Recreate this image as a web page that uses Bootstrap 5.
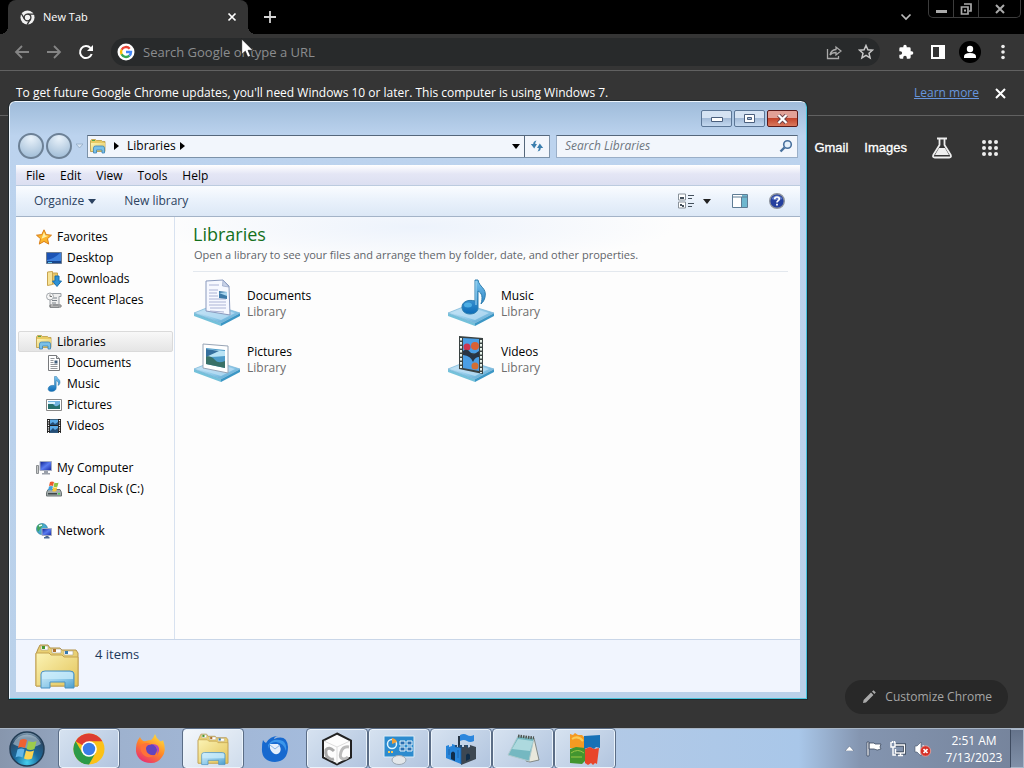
<!DOCTYPE html>
<html lang="en">
<head>
<meta charset="utf-8">
<meta name="viewport" content="width=device-width, initial-scale=1">
<title>New Tab</title>
<link href="https://cdn.jsdelivr.net/npm/bootstrap@5.3.0/dist/css/bootstrap.min.css" rel="stylesheet">
<style>
:root{--ui:"Open Sans","Noto Sans",sans-serif}
html,body{height:100%}
body{font-family:var(--ui);font-size:12px;line-height:16px;background:#353535;color:#000;overflow:hidden}
button,input{font:inherit;color:inherit}
svg{display:block;flex:none}
.plain{border:0;background:none;padding:0}
/* browser */
.tabstrip{background:#000;height:34px;color:#fff}
.tab{position:relative;width:240px;height:34px;margin-left:8px;background:#353535;border-radius:8px 8px 0 0;padding:0 11px 0 12px;font-size:11px}
.tab::before,.tab::after{content:"";position:absolute;bottom:0;width:8px;height:8px}
.tab::before{left:-8px;background:radial-gradient(circle at 0 0,#000 8px,#353535 8px)}
.tab::after{right:-8px;background:radial-gradient(circle at 100% 0,#000 8px,#353535 8px)}
.caption{height:18px;border:1px solid #3c3c3c;border-top:0;border-radius:0 0 5px 5px;color:#b4b4b4;margin-right:3px}
.caption button{width:25px;height:17px;border-right:1px solid #3c3c3c}
.caption button:last-child{width:41px;border:0}
.toolbar{height:37px;border-bottom:1px solid #616161;color:#fff;padding:0 14px}
.omni{height:28px;border-radius:14px;background:#282a2b;padding:0 6px;margin-left:17px;margin-right:18px}
.omni input{font-size:13px;line-height:20px;color:#9a9a9a;outline:0}
.omni input::placeholder{color:#8b8d8f;opacity:1}
.infobar{height:45px;border-bottom:1px solid #616161;color:#fff;padding:0 18px 0 16px}
.infobar a{color:#6795de}
.ntp-links{font-family:"Liberation Sans",Arial,sans-serif;font-size:13px;padding:0 25px 0 0;height:64px;-webkit-text-stroke:.3px #fff}
.ntp-links a{color:#fff;text-decoration:none}
.customize{background:#282828;color:#a5a5a5;height:34px;border-radius:17px;padding:0 16px;margin:0 16px 14px 0}
/* explorer window */
.explorer{left:9px;right:217px;top:101px;bottom:69px;border:1px solid #eef6fd;border-right-color:#49c4dc;border-bottom-color:#49c4dc;outline:1px solid #20282c;border-radius:6px 6px 0 0;background:linear-gradient(#9fbcda,#bcd3ee 34px,#bad1ea 100%);padding:0 6px 6px}
.titlebar{height:26px;padding-top:8px;padding-right:2px;gap:2px}
.titlebar button{width:31px;height:17px;border:1px solid #5b7696;border-radius:2px;background:linear-gradient(#d5e3f3 45%,#a3bbd8 50%,#c3d8ef)}
.titlebar button.shut{border-color:#5a1a1a;background:linear-gradient(#e2a197 45%,#c3452c 50%,#d9795d)}
.addr-row{height:37px;padding:7px 2px 0 2px}
.round{width:26px;height:26px;border-radius:50%;border:2px solid #6d8196;background:radial-gradient(circle at 50% 15%,#e9f2fa,#a9c3db 80%)}
.round + .round{margin-left:2px}
.addr{height:23px;border:1px solid #7c92a9;border-top-color:#55677b;background:#f2f6fc;padding-left:2px}
.addr .go{border-left:1px solid #55677b;width:25px;height:21px}
.seek{width:242px;height:23px;border:1px solid #9aafc8;border-top-color:#55677b;background:#f2f6fc;padding:0 4px 0 8px;margin-left:6px}
.seek input{font-style:italic;outline:0}
.seek input::placeholder{color:#6f7780;opacity:1}
.menus{height:21px;gap:15px;padding-left:10px;background:linear-gradient(#fff,#e4e6f5 45%,#dcdff1);border-bottom:1px solid #bccbdf}
.menus button{line-height:22px;height:20px}
.cmds{height:31px;background:linear-gradient(#fafcff,#e9f1fb 50%,#dce8f6);border-bottom:1px solid #a3b3c7;color:#2c4260;padding:0 15px 0 18px}
.body-area{background:#fdfdfd}
.side{width:159px;border-right:1px solid #d8e2f0;padding:9px 1px 0 2px}
.side a{height:21px;display:flex;align-items:center;gap:5px;padding-left:17px;color:#000;text-decoration:none;border:1px solid transparent;border-radius:2px}
.side a.sub{padding-left:27px}
.side ul{margin:0 0 21px;padding:0;list-style:none}
.side a.on{background:linear-gradient(#f8f8f8,#e5e5e5);border-color:#dadada}
.pane{padding:0 12px 0 18px;background:radial-gradient(ellipse 260px 36px at 240px 10px,#edf3fc,#fdfdfd)}
.pane h1{font-size:18px;line-height:24px;color:#14701c;margin:5px 0 0;font-weight:400}
.pane p{font-size:11px;color:#5f646a;margin:1px 0 0;padding:0 0 8px 1px;border-bottom:1px solid #e3e8ee}
.libs{display:grid;grid-template-columns:254px 254px;grid-auto-rows:56px;padding-top:7px}
.libs a{display:flex;gap:6px;color:#000;text-decoration:none}
.libs span{padding-top:9px}
.libs em{display:block;font-style:normal;color:#6d6d6d}
.details{height:53px;background:#f1f5fe;border-top:1px solid #c9d6e8;color:#1e395b;padding:2px 0 0 17px;gap:14px;font-size:13px}
/* taskbar */
.taskbar{height:40px;border-top:1px solid #a9b6c6;background:linear-gradient(90deg,#8796ad,#9eb2cf 12%,#a4bbdc 30%,#b4cae6 55%,#a9c7e9 78%,#8495b0 84%,#75839b)}
.orb{width:54px;margin-right:5px}
.tasks{gap:2px}
.task{width:60px;height:39px;border:1px solid transparent;border-radius:3px;display:flex;align-items:center;justify-content:center;background:none;padding:0}
.task.open{background:linear-gradient(135deg,#d6e2f0,#b2c5df);border-color:#eaf3fb;outline:1px solid #5b6d86}
.task.front{background:linear-gradient(135deg,#f3f7fb,#cfdcec)}
.tray{gap:8px}
.clock{color:#fff;text-align:center;line-height:17px;width:60px;margin:0 6px 0 10px}
.peek{width:14px;height:39px;border:1px solid #a9b7c9;border-left-color:#3e4b60;background:linear-gradient(#65738b,#8090a8)}
.pointer{left:241px;top:38px}
</style>
</head>
<body class="d-flex flex-column position-relative">
<svg width="0" height="0" class="position-absolute" aria-hidden="true">
<defs>
<linearGradient id="gb" x1="0" y1="0" x2="1" y2="1"><stop offset="0" stop-color="#d9f0fb"/><stop offset=".6" stop-color="#8cc8e8"/><stop offset="1" stop-color="#4a9cca"/></linearGradient>
<linearGradient id="gy" x1="0" y1="0" x2="1" y2="1"><stop offset="0" stop-color="#fbf3b4"/><stop offset="1" stop-color="#e3c45a"/></linearGradient>
<linearGradient id="gn" x1="0" y1="0" x2="0" y2="1"><stop offset="0" stop-color="#7ac4ee"/><stop offset="1" stop-color="#0c6cb8"/></linearGradient>
<linearGradient id="scr" x1="0" y1="0" x2="1" y2="1"><stop offset="0" stop-color="#0a1c8c"/><stop offset=".5" stop-color="#5a7cf0"/><stop offset="1" stop-color="#1424a0"/></linearGradient>
<symbol id="folders" viewBox="0 0 48 48">
<path d="M5 7l2-4h8l2 3h10l2 2h14l2 3v33H3V12z" fill="#e8cf72" stroke="#b3924a"/>
<path d="M8 4h7v4H8zM19 7h9v4h-9zM31 9h9v4h-9z" fill="#fff" stroke="#aaa28a" stroke-width=".6"/>
<path d="M9 4h3v3H9z" fill="#46962c"/><path d="M20 7h3v3h-3z" fill="#ae702e"/><path d="M32 9h3v3h-3z" fill="#3379ae"/>
<path d="M3 11h13l2 2h11l2 2h14v29H3z" fill="url(#gy)" stroke="#c4a351"/>
<path d="M8 46V32q0-3 4-3h25q4 0 4 3v14h-9v-6H17v6z" fill="url(#gb)" stroke="#4991c3"/>
<path d="M9 32q0-2 4-2h23q4 0 4 2v5H9z" fill="#c9ecfb" opacity=".75"/>
</symbol>
<symbol id="smallfolder" viewBox="0 0 16 16"><path d="M.5 3l1-1.500h4l1 1h5l1 1h2.500v10H.5z" fill="#e9cb62" stroke="#b99a45" stroke-width=".8"/><path d="M2 2h3v1H2z" fill="#55a445"/><path d="M1 5h14v8H1z" fill="url(#gy)"/><path d="M3.500 15v-5q0-2 2-2h7q2 0 2 2v5H12v-3H6.500v3z" fill="#79c0e8" stroke="#3c84b8" stroke-width=".8"/></symbol>
<symbol id="base" viewBox="0 0 48 48"><path d="M1 34l27 10v3L1 37z" fill="#74c1da"/><path d="M28 44l19-10v3L28 47z" fill="#3c97c5"/><path d="M1 34l20-8 26 8-19 10z" fill="url(#gb)" stroke="#74b1d5" stroke-width=".7"/><path d="M5 34l16-6 21 6-14 7z" fill="#c1e0f5" opacity=".7"/></symbol>
<symbol id="i-doc" viewBox="0 0 16 16"><path d="M2.500.5h8l3 3v12h-11z" fill="#fff" stroke="#77797c"/><path d="M10.500.5v3h3" fill="#ddd" stroke="#77797c"/><path d="M4.500 3.500h4M4.500 5.500h3M4.500 7.500h3M4.500 9.500h7M4.500 11.500h7M4.500 13.500h7" stroke="#93969b"/><path d="M8.500 5.500h3v3h-3z" fill="#3f5d7b"/></symbol>
<symbol id="i-note" viewBox="0 0 16 16"><path d="M8.500.5h2c.5 2 4 3 3.500 6-.2 1.500-1 2.500-2 3 .8-2.500.2-4-1.800-5V12c0 2-2 3.500-4.700 3.500-2.500 0-3.800-1.500-3.300-3.300.5-2 3-3.400 6.300-2.700z" fill="url(#gn)" stroke="#2c76a9" stroke-width=".5"/></symbol>
<symbol id="i-film" viewBox="0 0 16 16"><path d="M1 1h14v14H1z" fill="#222"/><path d="M4 1.500h8V7H4zM4 8h8v6.500H4z" fill="#5baae6"/><path d="M4 6l3-2 2 2 3-2v3H4zM4 13l3-3 2 2 3-2v4.500H4z" fill="#234d77"/><path d="M2.500 2v13M13.500 2v13" stroke="#fff" stroke-width="1.200" stroke-dasharray="1.200 1.200"/></symbol>
<symbol id="i-pic" viewBox="0 0 16 16"><path d="M.5 2.500h15v11H.5z" fill="#fff" stroke="#888"/><path d="M2 4h12v8H2z" fill="#71b3df"/><path d="M2 7q4-2 6 1t6-1v5H2z" fill="#26706c"/><path d="M2 5h7v2H2z" fill="#d5effc"/></symbol>
</defs>
</svg>

<main class="flex-grow-1 d-flex flex-column">
<div class="tabstrip d-flex align-items-start">
  <div class="tab d-flex align-items-center">
    <svg width="15" height="15" viewBox="0 0 16 16"><circle cx="8" cy="8" r="7.500" fill="#f1f1f1"/><circle cx="8" cy="8" r="3.600" fill="none" stroke="#353535" stroke-width="1.400"/><path d="M8 4.400h7M4.900 9.800L1.500 4M11.100 9.800L7.600 15.600" stroke="#353535" stroke-width="1.400"/></svg>
    <span class="ms-2">New Tab</span>
    <button class="plain ms-auto" aria-label="Close tab"><svg width="10" height="10" viewBox="0 0 10 10"><path d="M1.500 1.500l7 7m0-7l-7 7" stroke="#fff" stroke-width="1.700"/></svg></button>
  </div>
  <button class="plain align-self-center ms-3" aria-label="New tab"><svg width="12" height="12" viewBox="0 0 12 12"><path d="M6 0v12M0 6h12" stroke="#d4d4d4" stroke-width="1.800"/></svg></button>
  <button class="plain ms-auto me-3 align-self-center" aria-label="Search tabs"><svg width="12" height="12" viewBox="0 0 12 12"><path d="M1.500 3.500L6 8l4.500-4.500" fill="none" stroke="#bbb" stroke-width="1.700"/></svg></button>
  <div class="caption d-flex">
    <button class="plain d-flex justify-content-center align-items-center" aria-label="Minimize browser"><svg width="11" height="11"><path d="M0 7h11v3H0z" fill="#aaa"/></svg></button>
    <button class="plain d-flex justify-content-center align-items-center" aria-label="Restore browser"><svg width="12" height="12" viewBox="0 0 12 12"><path d="M4 1h7v7H9M1.500 4h6.500v7H1.500z" fill="none" stroke="#aaa" stroke-width="1.700"/><path d="M4 6.500h2v2H4z" fill="#aaa"/></svg></button>
    <button class="plain d-flex justify-content-center align-items-center" aria-label="Close browser"><svg width="10" height="10" viewBox="0 0 10 10"><path d="M1 1l8 8m0-8L1 9" stroke="#aaa" stroke-width="2"/></svg></button>
  </div>
</div>
<div class="toolbar d-flex align-items-center">
  <button class="plain" aria-label="Back"><svg width="16" height="16" viewBox="0 0 16 16"><path d="M15 8H2m6-6L2 8l6 6" fill="none" stroke="#858585" stroke-width="1.800"/></svg></button>
  <button class="plain ms-3" aria-label="Forward"><svg width="16" height="16" viewBox="0 0 16 16"><path d="M1 8h13M8 2l6 6-6 6" fill="none" stroke="#858585" stroke-width="1.800"/></svg></button>
  <button class="plain ms-3" aria-label="Reload"><svg width="16" height="16" viewBox="0 0 16 16"><path d="M13.700 10A6 6 0 1 1 12.500 4" fill="none" stroke="#fff" stroke-width="2"/><path d="M15 1v6H9z" fill="#fff"/></svg></button>
  <div class="omni flex-grow-1 d-flex align-items-center">
    <svg width="18" height="18" viewBox="0 0 18 18"><circle cx="9" cy="9" r="8.500" fill="#fff"/><g fill="none" stroke-width="2.400"><path d="M12.700 5.700A5 5 0 0 0 4.600 6.700" stroke="#ea4335"/><path d="M4.600 6.700a5 5 0 0 0 0 4.700" stroke="#fbbc05"/><path d="M4.600 11.300a5 5 0 0 0 7.800 1.400" stroke="#34a853"/><path d="M12.400 12.700A5 5 0 0 0 14 9H9" stroke="#4285f4"/></g></svg>
    <input class="plain flex-grow-1 ms-2" type="text" placeholder="Search Google or type a URL" aria-label="Address">
    <button class="plain" aria-label="Share"><svg width="16" height="16" viewBox="0 0 16 16"><path d="M1.500 5v9.500h11V12M4 11q1-5 6-5.500V3l5 4-5 4V8.500Q6 8.500 4 11z" fill="none" stroke="#aaa" stroke-width="1.300"/></svg></button>
    <button class="plain ms-3" aria-label="Bookmark"><svg width="16" height="16" viewBox="0 0 16 16"><path d="M8 1.500l1.900 4.300 4.600.4-3.500 3.100 1.100 4.600L8 11.400l-4.100 2.500L5 9.300 1.500 6.200l4.600-.4z" fill="none" stroke="#c8c8c8" stroke-width="1.500"/></svg></button>
  </div>
  <button class="plain" aria-label="Extensions"><svg width="16" height="16" viewBox="0 0 24 24"><path d="M20.500 11H19V7a2 2 0 0 0-2-2h-4V3.500a2.500 2.500 0 0 0-5 0V5H4a2 2 0 0 0-2 2v3.800h1.500a2.700 2.700 0 0 1 0 5.400H2V20a2 2 0 0 0 2 2h3.800v-1.500a2.700 2.700 0 0 1 5.400 0V22H17a2 2 0 0 0 2-2v-4h1.500a2.500 2.500 0 0 0 0-5z" fill="#fff"/></svg></button>
  <button class="plain ms-3" aria-label="Side panel"><svg width="16" height="16" viewBox="0 0 16 16"><path d="M1 1h14v14H1zm2 2v10h6V3z" fill="#fff" fill-rule="evenodd"/></svg></button>
  <button class="plain ms-2 ps-1" aria-label="Profile"><svg width="24" height="24" viewBox="0 0 24 24"><circle cx="12" cy="12" r="11" fill="#000"/><circle cx="12" cy="9" r="3.200" fill="#fff"/><path d="M6 18v-1.500q0-3.500 6-3.500t6 3.500V18z" fill="#fff"/></svg></button>
  <button class="plain ms-3" aria-label="Menu"><svg width="12" height="16" viewBox="0 0 12 16"><g fill="#eee"><circle cx="5" cy="2.500" r="1.800"/><circle cx="5" cy="8" r="1.800"/><circle cx="5" cy="13.500" r="1.800"/></g></svg></button>
</div>
<div class="infobar d-flex align-items-center">
  <span>To get future Google Chrome updates, you'll need Windows 10 or later. This computer is using Windows 7.</span>
  <a class="ms-auto me-3" href="#">Learn more</a>
  <button class="plain" aria-label="Dismiss"><svg width="11" height="11" viewBox="0 0 11 11"><path d="M1 1l9 9m0-9l-9 9" stroke="#fff" stroke-width="2"/></svg></button>
</div>
<nav class="ntp-links d-flex justify-content-end align-items-center">
  <a href="#">Gmail</a><a href="#" class="ms-3">Images</a>
  <a href="#" class="ms-4" aria-label="Labs"><svg width="22" height="22" viewBox="0 0 22 22"><path d="M6 1.500h10M8.500 2v6L2.300 18q-1 2.500 1.500 2.500h14.400q2.500 0 1.500-2.500L13.500 8V2" fill="none" stroke="#eee" stroke-width="1.800"/><path d="M8 11h6l4 7H4z" fill="#eee"/></svg></a>
  <a href="#" class="ms-4 ps-1" aria-label="Apps"><svg width="18" height="18" viewBox="0 0 18 18"><g fill="#eee"><circle cx="3" cy="3" r="2"/><circle cx="9" cy="3" r="2"/><circle cx="15" cy="3" r="2"/><circle cx="3" cy="9" r="2"/><circle cx="9" cy="9" r="2"/><circle cx="15" cy="9" r="2"/><circle cx="3" cy="15" r="2"/><circle cx="9" cy="15" r="2"/><circle cx="15" cy="15" r="2"/></g></svg></a>
</nav>
<button class="plain customize mt-auto align-self-end d-flex align-items-center gap-2"><svg width="16" height="16" viewBox="0 0 16 16"><path d="M2 14l.6-3L10 3.600l2.400 2.400L5 13.400zM11 2.600L12.500 1.200 14.800 3.500 13.400 5z" fill="#aaa"/></svg>Customize Chrome</button>
</main>

<section class="explorer position-absolute d-flex flex-column" aria-label="Explorer">
  <div class="titlebar d-flex justify-content-end">
    <button class="p-0 d-flex justify-content-center align-items-center" aria-label="Minimize"><svg width="12" height="6"><path d="M.5 1.500h11v4H.5z" fill="#fff" stroke="#4a5f7d"/></svg></button>
    <button class="p-0 d-flex justify-content-center align-items-center" aria-label="Maximize"><svg width="11" height="9"><path d="M.5.500h10v8H.5z" fill="#fff" stroke="#4a5f7d"/><path d="M3.500 3.500h4v2h-4z" fill="#a9c0dc" stroke="#4a5f7d"/></svg></button>
    <button class="shut p-0 d-flex justify-content-center align-items-center" aria-label="Close"><svg width="13" height="10" viewBox="0 0 13 10"><path d="M2.500 1l8 8m0-8l-8 8" stroke="#6a4047" stroke-width="4"/><path d="M2.500 1l8 8m0-8l-8 8" stroke="#fff" stroke-width="2.300"/></svg></button>
  </div>
  <div class="addr-row d-flex align-items-center pb-2">
    <button class="round p-0" aria-label="Back"></button>
    <button class="round p-0" aria-label="Forward"></button>
    <button class="plain px-1" aria-label="Recent"><svg width="7" height="6"><path d="M0 1h7L3.500 5z" fill="#d7e5f4" stroke="#92abc5" stroke-width=".8"/></svg></button>
    <div class="addr flex-grow-1 d-flex align-items-center">
      <svg width="16" height="16"><use href="#smallfolder"/></svg>
      <svg class="ms-2" width="5" height="8"><path d="M0 0l5 4-5 4z"/></svg>
      <button class="plain ms-2">Libraries</button>
      <svg class="ms-1" width="5" height="8"><path d="M0 0l5 4-5 4z"/></svg>
      <button class="plain ms-auto me-1 pe-0" aria-label="Locations"><svg width="8" height="5"><path d="M0 0h8L4 5z"/></svg></button>
      <button class="plain go d-flex justify-content-center align-items-center" aria-label="Refresh"><svg width="14" height="14" viewBox="0 0 14 14"><path d="M6.500 1.500Q3.200 2 3.200 5H.8l3.400 4.500L7 5H5.200Q5.200 3 6.500 1.500zM7.500 12.500q3.300-.5 3.300-3.500h2.400L9.800 4.500 7 9h1.800q0 2-1.300 3.500z" fill="#3b7eae"/></svg></button>
    </div>
    <div class="seek d-flex align-items-center">
      <input class="plain flex-grow-1" type="search" placeholder="Search Libraries" aria-label="Search Libraries">
      <svg width="14" height="14" viewBox="0 0 14 14"><circle cx="8.500" cy="5.500" r="3.800" fill="#e5f0fa" stroke="#48709d" stroke-width="1.600"/><path d="M5.500 8.500L1.500 12.500" stroke="#48709d" stroke-width="2.400"/></svg>
    </div>
  </div>
  <div class="menus d-flex">
    <button class="plain">File</button><button class="plain">Edit</button><button class="plain">View</button><button class="plain">Tools</button><button class="plain">Help</button>
  </div>
  <div class="cmds d-flex align-items-center">
    <button class="plain d-flex align-items-center gap-1">Organize<svg width="8" height="5"><path d="M0 0h8L4 5z" fill="#2c4260"/></svg></button>
    <button class="plain ms-4 ps-1">New library</button>
    <button class="plain ms-auto d-flex align-items-center" aria-label="Change view"><svg width="17" height="16" viewBox="0 0 17 16"><path d="M.5 1h7v6h-7zM.5 9h7v6h-7z" fill="#fff" stroke="#8a929a"/><path d="M2 4h4v2H2zM2 11h2v2H2zM4 12h2v2H4z" fill="#44505c"/><path d="M10 2.500h6M10 5.500h4M10 10.500h6M10 13.500h4" stroke="#44505c"/></svg><svg class="ms-2" width="8" height="5"><path d="M0 0h8L4 5z" fill="#222"/></svg></button>
    <button class="plain ms-3 ps-1" aria-label="Preview pane"><svg width="18" height="14" viewBox="-1 0 18 14"><path d="M.5.500h15v13H.5z" fill="#fff" stroke="#5f7c94"/><path d="M10 1h5v12h-5z" fill="#6eb7cf"/><path d="M1 3h14M9.500 3v11" stroke="#5f7c94"/></svg></button>
    <button class="plain ms-3 ps-1" aria-label="Help"><svg width="16" height="16" viewBox="0 0 16 16"><circle cx="8" cy="8" r="7.300" fill="#243f9e" stroke="#8d939d" stroke-width="1.400"/><path d="M2.500 6a6 6 0 0 1 11 0q-5 2-11 0z" fill="#7d97da" opacity=".7"/><path d="M5.700 6.200q0-2.200 2.300-2.200t2.300 2q0 1-1.200 1.700T8 9.500" fill="none" stroke="#fff" stroke-width="1.700"/><path d="M7.100 10.800h1.800v1.800H7.100z" fill="#fff"/></svg></button>
  </div>
  <div class="body-area flex-grow-1 d-flex">
    <nav class="side flex-shrink-0">
      <ul>
        <li><a href="#"><svg width="16" height="16" viewBox="0 0 16 16"><path d="M8 .8l2.200 4.800 5.300.6-4 3.500 1.200 5.400L8 12.400l-4.700 2.700 1.200-5.400-4-3.500 5.300-.6z" fill="#fbb62c" stroke="#d97e18"/><path d="M8 3l1.300 3.500 3.200.3-7 3z" fill="#fff0a8"/></svg>Favorites</a></li>
        <li><a class="sub" href="#"><svg width="16" height="16" viewBox="0 0 16 16"><path d="M.5 2.500h15v11H.5z" fill="#17458c" stroke="#6b7c92"/><path d="M1 3h14v8H1z" fill="#1b53b5"/><path d="M1 10q7-1 13-7h1v8H1z" fill="#3c7fdc"/><path d="M2 12h4v1H2z" fill="#5ec4ef"/></svg>Desktop</a></li>
        <li><a class="sub" href="#"><svg width="16" height="16" viewBox="0 0 16 16"><path d="M1.500 1l5-.5v13l-5 1z" fill="#f7e398" stroke="#c8a44f"/><path d="M6.500 2h5v11h-5z" fill="#e7c766" stroke="#c8a44f"/><path d="M9 5h4v5h2.500L11 15.500 6.500 10H9z" fill="#2d91d5" stroke="#1870af"/></svg>Downloads</a></li>
        <li><a class="sub" href="#"><svg width="16" height="16" viewBox="0 0 16 16"><path d="M5 1.500h10v3h-2v11H4v-11z" fill="#eee" stroke="#999ea3"/><path d="M6 6h3M6 8.500h5M6 11h4M7 13h5M10 5v2" stroke="#7b8289"/><circle cx="4" cy="4.500" r="3.500" fill="#f6f6f6" stroke="#a4a8ac"/><path d="M4 2.500v2h2M4 13h11v2H4z" fill="none" stroke="#777"/></svg>Recent Places</a></li>
      </ul>
      <ul>
        <li><a class="on" href="#"><svg width="16" height="16"><use href="#smallfolder"/></svg>Libraries</a></li>
        <li><a class="sub" href="#"><svg width="16" height="16"><use href="#i-doc"/></svg>Documents</a></li>
        <li><a class="sub" href="#"><svg width="16" height="16"><use href="#i-note"/></svg>Music</a></li>
        <li><a class="sub" href="#"><svg width="16" height="16"><use href="#i-pic"/></svg>Pictures</a></li>
        <li><a class="sub" href="#"><svg width="16" height="16"><use href="#i-film"/></svg>Videos</a></li>
      </ul>
      <ul>
        <li><a href="#"><svg width="16" height="16" viewBox="0 0 16 16"><path d="M.5 5.500h2v8h-2z" fill="#ccc" stroke="#8a8e90"/><path d="M4 1.500h11.500v9H4z" fill="url(#scr)" stroke="#a6adc0"/><path d="M8 11h4v2h2v1.500H6V13h2z" fill="#9aa0aa"/></svg>My Computer</a></li>
        <li><a class="sub" href="#"><svg width="16" height="16" viewBox="0 0 16 16"><path d="M2 8.500h12l1.500 3v3.500H.5v-3.500z" fill="#a2aaaa" stroke="#6b7474"/><path d="M2 12h9v1.500H2z" fill="#3d4747"/><path d="M12 12h2v1.500h-2z" fill="#49d455"/><path d="M4 1q2-1 4 0L7 5Q5 4 3 5z" fill="#ed5a2c"/><path d="M8.500 1.500q2 1 4 0l-1 4q-2 1-4 0z" fill="#8dc344"/><path d="M3 5.500q2-1 4 0l-1 4q-2-1-4 0z" fill="#41a0db"/><path d="M7.300 6q2 1 4 0l-1 4q-2 1-4 0z" fill="#f8c934"/></svg>Local Disk (C:)</a></li>
      </ul>
      <ul>
        <li><a href="#"><svg width="16" height="16" viewBox="0 0 16 16"><circle cx="6" cy="6" r="5.500" fill="#45a9cf" stroke="#2c7ba0" stroke-width=".7"/><path d="M2 2q3-2 5 0L5 5 2 9Q0 5 2 2z" fill="#43a35d"/><path d="M3 3l3-1" stroke="#e3faff" stroke-width="1.500"/><path d="M6 5.500h9.500v7H6z" fill="url(#scr)" stroke="#a6adc0"/><path d="M9.500 13h3v1h1v1.500H8V14h1.500z" fill="#4d6a92"/></svg>Network</a></li>
      </ul>
    </nav>
    <div class="pane flex-grow-1">
      <h1>Libraries</h1>
      <p>Open a library to see your files and arrange them by folder, date, and other properties.</p>
      <div class="libs">
        <a href="#"><svg width="48" height="48" viewBox="0 0 48 48"><use href="#base"/><path d="M13 2l17-1 6 6 1 29-24-4z" fill="#f6f8ff" stroke="#8999bd"/><path d="M30 1l-.5 6 6.500 1z" fill="#c7d2e8" stroke="#8999bd" stroke-width=".6"/><path d="M16 6h10M16 11h9M16 14h8M16 17h9M16 20h17M16 23h17M16 26h17M17 29h16M17 32l14 1" stroke="#a3acd0" stroke-width=".9"/><path d="M26 12l8 1v7l-8-1z" fill="#3c79a7"/><path d="M26 14l8 3v-4z" fill="#a9d6ef"/></svg><span>Documents<em>Library</em></span></a>
        <a href="#"><svg width="48" height="48" viewBox="0 0 48 48"><use href="#base"/><path d="M28 1h3c1 7 9 8 7 17-.5 3-2 5-4 7 2-7 1-11-3-13v17c0 4-4 6-8 6-5 0-8-3-8-7 0-5 6-8 13-6z" fill="url(#gn)" stroke="#2d7dae"/><path d="M29 2v24" stroke="#a9dcf4"/><ellipse cx="21" cy="26" rx="4" ry="2.500" fill="#5cc0f1" opacity=".7"/></svg><span>Music<em>Library</em></span></a>
        <a href="#"><svg width="48" height="48" viewBox="0 0 48 48"><use href="#base"/><path d="M10 9l25 2v27l-25-5z" fill="#fff" stroke="#97a4b5"/><path d="M13 13l19 2v18l-19-4z" fill="#4e9cc9"/><path d="M13 14l19 2v5q-9 1-19 1z" fill="#b9e3f5"/><path d="M13 21q6 0 9 4t10 1v7l-19-4z" fill="#397167"/><path d="M13 14v8l13-6z" fill="#356f9d"/></svg><span>Pictures<em>Library</em></span></a>
        <a href="#"><svg width="48" height="48" viewBox="0 0 48 48"><use href="#base"/><path d="M12 1l24 2v36l-24-5z" fill="#3a4242"/><path d="M16 3l16 1v15l-16-2zM16 19l16 2v15l-16-3z" fill="#4a9ee5"/><circle cx="20" cy="12" r="3.500" fill="#cd3550"/><circle cx="28" cy="11" r="4" fill="#db6233"/><circle cx="28" cy="31" r="3.500" fill="#d46e33"/><path d="M16 16q4-3 7 1l3 3 6-4v6q-4 0-6 5-2-6-10-7z" fill="#283545"/><path d="M14 3v30M34 5v33" stroke="#e6f2ea" stroke-width="2" stroke-dasharray="2.500 1.500"/></svg><span>Videos<em>Library</em></span></a>
      </div>
    </div>
  </div>
  <div class="details d-flex"><svg width="48" height="48"><use href="#folders"/></svg><span class="pt-1">4 items</span></div>
</section>

<footer class="taskbar d-flex align-items-center">
  <button class="plain orb d-flex justify-content-center" aria-label="Start"><svg width="36" height="36" viewBox="0 0 36 36"><defs><radialGradient id="orb" cx=".5" cy=".9" r=".9"><stop offset="0" stop-color="#46d0ef"/><stop offset=".4" stop-color="#1a6a9d"/><stop offset=".8" stop-color="#2b4a68"/><stop offset="1" stop-color="#8fa9bd"/></radialGradient></defs><circle cx="18" cy="18" r="17" fill="url(#orb)" stroke="#223c54" stroke-width="1.500"/><path d="M4 13a15 15 0 0 1 28 0q-14 8-28 0z" fill="#d4e4ee" opacity=".5"/><path d="M11 9q4-2 7 0l-2 8q-4-2-7 0z" fill="#ef6232"/><path d="M19.500 10q4 2 8 0l-2 8q-4 2-8 0z" fill="#9ccb4c"/><path d="M8.500 18.500q4-2 7 0l-2 8q-4-2-7 0z" fill="#62b6e8"/><path d="M17 19.500q4 2 8 0l-2 8q-4 2-8 0z" fill="#fbd451"/></svg></button>
  <div class="tasks d-flex">
  <button class="task open" aria-label="Chrome"><svg width="32" height="32" viewBox="0 0 32 32"><circle cx="16" cy="16" r="15.500" fill="#fbc116"/><path d="M16 16L2.600 8.200A15.500 15.500 0 0 1 29.400 8.200H16z" fill="#dd3d31"/><path d="M2.600 8.200A15.500 15.500 0 0 0 16 31.500l6.500-11.600L16 16 9.300 19.800z" fill="#2b9a48"/><circle cx="16" cy="16" r="7.800" fill="#fff"/><circle cx="16" cy="16" r="6.200" fill="#3a7de8"/></svg></button>
  <button class="task" aria-label="Firefox"><svg width="32" height="32" viewBox="0 0 32 32"><defs><linearGradient id="ff" x1=".8" y1="0" x2=".2" y2="1"><stop offset="0" stop-color="#ffe23c"/><stop offset=".5" stop-color="#ff8426"/><stop offset="1" stop-color="#e72779"/></linearGradient></defs><path d="M3 7l2-3q2 5 6 4 3-1 5-1 2-1 4-6 1 4 5 7 2 1 3-1 4 11-1 17-4 6-11 6C7 30 0 24 1 15q0-4 2-8z" fill="url(#ff)"/><circle cx="16" cy="17" r="6" fill="#6244bd"/><path d="M6 12q6-4 11 0-6-1-6 4 1 7 9 6-5 4-10 1-6-4-4-11z" fill="#ff7139"/><path d="M17 11q8 0 7 7l-2 4q2-8-5-11z" fill="#b046c2"/></svg></button>
  <button class="task open front" aria-label="Explorer"><svg width="36" height="34" viewBox="0 0 48 48"><use href="#folders"/></svg></button>
  <button class="task" aria-label="Thunderbird"><svg width="28" height="28" viewBox="0 0 28 28"><path d="M2 5q1 2 3 3Q9 1 17 1q-4 1-4 3 13-5 14 8 0 14-13 15Q0 26 1 13q0-5 1-8z" fill="#1769cf"/><path d="M7 10q5-8 15-4 4 3 3 10-2-8-10-9-7 0-8 7z" fill="#3b96ea"/><path d="M9 9h8q4 4 2 8-3 4-7 1-4-3-3-9z" fill="#e5effb"/><path d="M9 10l5 4 5-4" fill="none" stroke="#88b5e7"/></svg></button>
  <button class="task open" aria-label="Cube"><svg width="32" height="34" viewBox="0 0 32 34"><path d="M16 1.500l14 7v17l-14 7-14-7v-17z" fill="#fdfdfd" stroke="#222" stroke-width="2"/><path d="M3 9l13 6 13-6M16 15v17" fill="none" stroke="#ddd"/><path d="M13 19q-5-5-8-1-1 6 3 8 2 2 5 1" fill="none" stroke="#aaa" stroke-width="3"/><path d="M28 15q-6-1-8 5-2 6 2 7 3 0 5-2" fill="none" stroke="#bbb" stroke-width="3"/></svg></button>
  <button class="task open" aria-label="Control Panel"><svg width="34" height="32" viewBox="0 0 34 32"><path d="M2 3h30v21H2z" fill="#2c8bce" stroke="#dcecf7"/><circle cx="10" cy="11" r="4.500" fill="none" stroke="#dff3fb" stroke-width="1.500"/><path d="M10 11V5a6 6 0 0 1 5 4z" fill="#f2a139"/><path d="M18 8h5v4h-5zM25 8h5v4h-5zM18 14h5v4h-5zM25 14h5v4h-5z" fill="#2b6fb1" stroke="#e8f6fd"/><path d="M6 19h5" stroke="#f8c755" stroke-width="2" stroke-dasharray="2 1"/><ellipse cx="17" cy="27" rx="7" ry="4.500" fill="#e3e7ea" stroke="#9ba6b1"/></svg></button>
  <button class="task open" aria-label="Castle"><svg width="34" height="32" viewBox="0 0 34 32"><path d="M14 14V3h2v11z" fill="#263545"/><path d="M16 2q4-2 7 0t7 0v6q-4 2-7 0t-7 0z" fill="#2b86dd"/><path d="M10 12h3v2h2v-2h3v2h2v-2h4v8H10z" fill="#254e76"/><path d="M2 13l3-1v2l3-1v-2l3 1v2l6 1v16L2 25z" fill="#2684d9"/><path d="M17 15l3-1v-2l3 1v2l3-1v-2l6 2v12l-15 6z" fill="#3d4752"/><path d="M7 26v-6q2-3 4 0v8zM22 28v-6q2-3 4 0v4z" fill="#102d49"/><path d="M17 15v16M5 16v6M14 17v8" stroke="#1c5d9e" stroke-width=".8"/></svg></button>
  <button class="task open" aria-label="Notepad"><svg width="34" height="32" viewBox="0 0 34 32"><path d="M28 5l5 22-9 2-4-1z" fill="#e9e8dc" stroke="#6d736e" stroke-width=".8"/><path d="M12 3l16 2-5 23L2 22z" fill="#75b8c1" stroke="#aec9cd"/><path d="M12 6l15 2-3 10-18-2z" fill="#c4e7e9" opacity=".7"/><path d="M12 3l16 2" stroke="#4d5350" stroke-width="3" stroke-dasharray="1.500 1"/></svg></button>
  <button class="task open" aria-label="Antivirus"><svg width="34" height="34" viewBox="0 0 34 34"><path d="M2 2l3 1 2-2 3 2h4l3 3v10H2z" fill="#f49a22"/><path d="M2 17l6-2 9 1v13l-3 3-12-1z" fill="#42952f"/><path d="M16 4l16-1v13l-4-1-2 2-4-2-6 2z" fill="#1771b6"/><path d="M17 17l5-2 4 2 5-1-2 16-2-1-2 2-2-2-3 2-3-2z" fill="#e8452a"/><path d="M3 21q7-5 13 0M3 25h11" stroke="#9bc647" fill="none"/><path d="M4 7q6-4 11 2" stroke="#fccb55" stroke-width="2" fill="none"/></svg></button>
  </div>
  <div class="tray ms-auto d-flex align-items-center">
    <button class="plain me-1" aria-label="Hidden icons"><svg width="9" height="5"><path d="M0 5h9L4.500 0z" fill="#fff" stroke="#53627a" stroke-width=".5"/></svg></button>
    <svg width="16" height="16" viewBox="0 0 16 16"><path d="M1 1h2v14H1zM3 2h5l1 1h6l-1 3 1 2q-4 2-7 0H3z" fill="#fff" stroke="#3c4a60" stroke-width=".8"/></svg>
    <svg width="16" height="16" viewBox="0 0 16 16"><path d="M5 4h9.500v8H5.500" fill="none" stroke="#293748" stroke-width="3"/><path d="M5 4h9.500v8H5.500V8M8 14.500h5M10.500 12v2M1 1v5h4V1M3 6v8h3M2.500 0v2M4.500 0v2" fill="none" stroke="#fff" stroke-width="1.400"/></svg>
    <svg width="18" height="16" viewBox="0 0 18 16"><path d="M1 5h2l4-4v14l-4-4H1z" fill="#fff" stroke="#46546a" stroke-width=".6"/><path d="M9 4q2 3 0 7" stroke="#fff" fill="none"/><circle cx="11.500" cy="10" r="5.200" fill="#d52f26" stroke="#f1afa9" stroke-width=".7"/><path d="M9.500 8l4 4m0-4l-4 4" stroke="#fff" stroke-width="1.700"/></svg>
    <div class="d-flex align-items-center">
    <div class="clock ms-1">2:51 AM<br>7/13/2023</div>
    <button class="peek p-0" aria-label="Show desktop"></button>
    </div>
  </div>
</footer>
<svg class="pointer position-absolute" width="14" height="21" viewBox="0 0 14 21" aria-hidden="true"><path d="M.7 1v15.500l3.600-3.300 2.500 6 2.700-1.200-2.500-5.700h5z" fill="#fff" stroke="#111" stroke-width=".7"/></svg>
<script src="https://cdn.jsdelivr.net/npm/bootstrap@5.3.0/dist/js/bootstrap.bundle.min.js"></script>
</body>
</html>
